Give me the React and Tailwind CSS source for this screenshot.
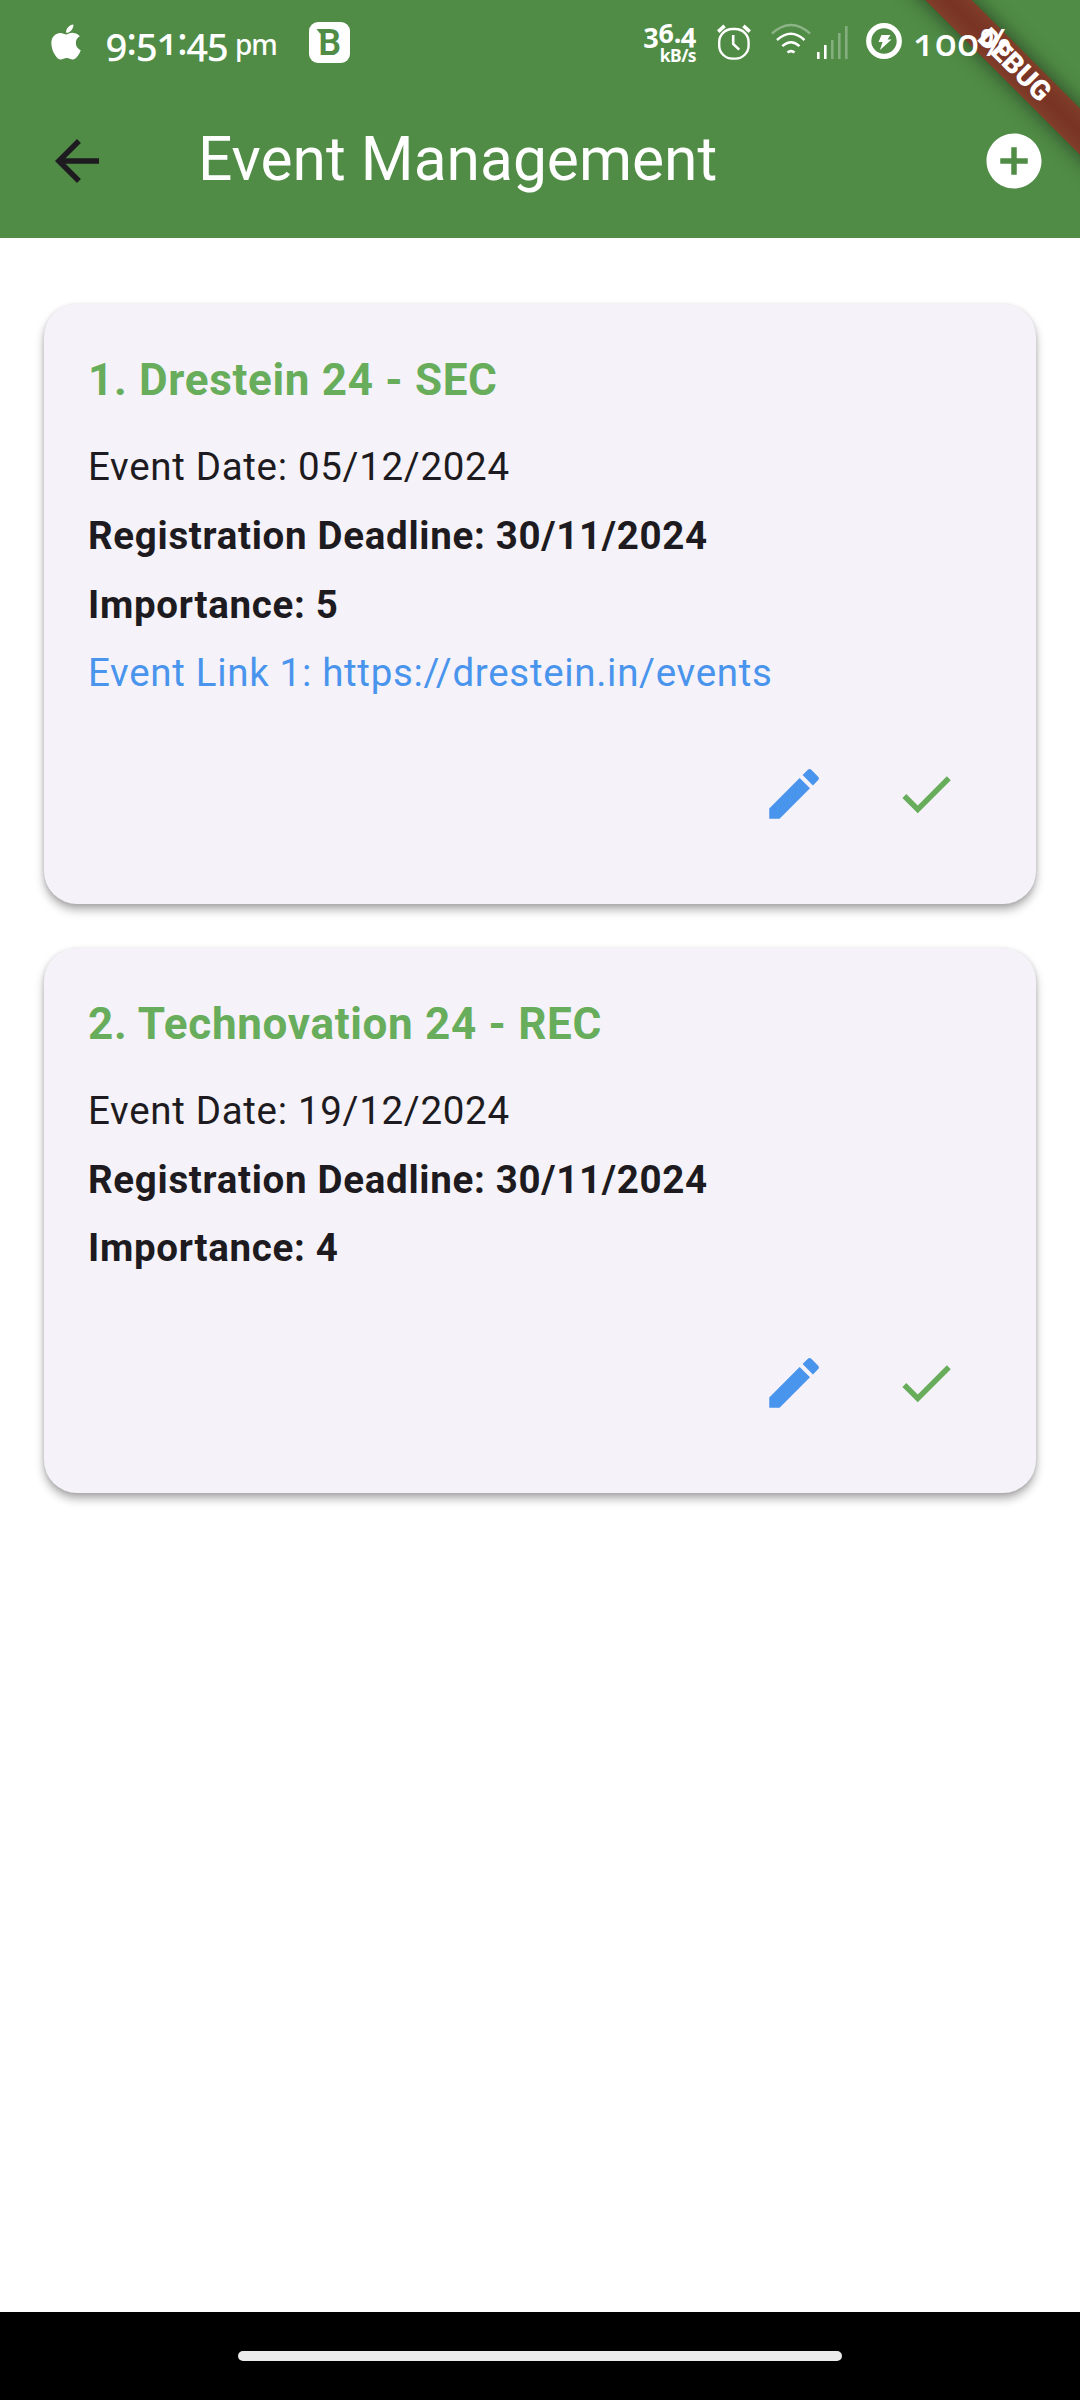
import React from 'react';
import { FaApple } from 'react-icons/fa';
import { MdAddCircle, MdArrowBack, MdCheck, MdEdit } from 'react-icons/md';

const events = [
  {
    title: '1. Drestein 24 - SEC',
    date: '05/12/2024',
    deadline: '30/11/2024',
    importance: 5,
    link: 'Event Link 1: https://drestein.in/events',
  },
  { title: '2. Technovation 24 - REC', date: '19/12/2024', deadline: '30/11/2024', importance: 4 },
];

function AlarmIcon() {
  return (
    <svg className="ml-[21px] mt-[24px] h-9 w-[34px] shrink-0" viewBox="0 0 34 36" fill="none" stroke="#fff">
      <rect x="2.2" y="5" width="29.4" height="29.6" rx="13.2" strokeWidth="2.4" />
      <path d="M1.2 7.6 7.6 1.8M32.8 7.6 26.4 1.8" strokeWidth="3.6" />
      <path d="M16.2 11v9l6 5.6" strokeWidth="2.6" />
    </svg>
  );
}

function WifiIcon() {
  return (
    <svg className="ml-[20px] mt-[23px] h-8 w-10 shrink-0" viewBox="0 0 40 32" fill="none" stroke="#fff" strokeWidth="2.4">
      <path d="M1 10.5Q20 -6.5 39 10.5" opacity=".35" />
      <path d="M6 17Q20 4.5 33.5 17" />
      <path d="M11.3 23.2Q20 15.4 28.5 23.2" />
      <path d="M16.5 29.5Q20 26.8 23.5 29.5" strokeWidth="2.8" />
    </svg>
  );
}

function SignalIcon() {
  return (
    <svg className="ml-[5px] mt-[26px] h-[33px] w-8 shrink-0" viewBox="0 0 32 33" fill="#fff">
      <rect x="1" y="26" width="2.6" height="7" />
      <rect x="8" y="19" width="2.6" height="14" />
      <rect x="15" y="14" width="2.6" height="19" opacity=".3" />
      <rect x="22" y="7" width="2.6" height="26" opacity=".3" />
      <rect x="29" y="0" width="2.6" height="33" opacity=".3" />
    </svg>
  );
}

function ChargeIcon() {
  return (
    <svg className="ml-[18px] mt-[23px] size-9 shrink-0" viewBox="0 0 36 36">
      <circle cx="18" cy="18" r="15.3" fill="none" stroke="#fff" strokeWidth="5.2" />
      <path d="M15.5 12h9l-3 4.500h4L14 27l2.500-8H12.500z" fill="#fff" />
    </svg>
  );
}

function StatusBar() {
  return (
    <div className="relative z-20 flex h-[84px] items-start font-['Noto_Sans',sans-serif] text-white [font-feature-settings:'onum']">
      <FaApple className="ml-[48px] mt-[22px] h-[40px] w-[36px] shrink-0" />
      <div className="ml-[22px] mt-[14px] w-[122px] whitespace-nowrap text-[38px] font-medium leading-[52px] tracking-[-0.7px]">9:51:45</div>
      <div className="ml-[7px] mt-[24px] w-[50px] whitespace-nowrap text-[28px] font-medium leading-[40px] tracking-[-1.2px]">pm</div>
      <svg className="ml-[24px] mt-[22px] size-[41px] shrink-0" viewBox="0 0 41 41">
        <rect width="41" height="41" rx="9" fill="#fff" />
        <text x="9.2" y="33" fontFamily="Roboto" fontSize="36" fontWeight="600" fill="#508c46">B</text>
        <path d="M7.500 7h6v4.500h-2.500z" fill="#508c46" />
      </svg>
      <div className="ml-[288px] mt-[19px] flex w-[58px] flex-col items-end whitespace-nowrap font-bold">
        <div className="text-[27px] leading-[28px] tracking-[-0.5px]">36.4</div>
        <div className="mt-[-3px] text-[17.5px] leading-[22px] tracking-[-0.6px]">kB/s</div>
      </div>
      <AlarmIcon />
      <WifiIcon />
      <SignalIcon />
      <ChargeIcon />
      <div className="ml-[11px] mt-[15px] whitespace-nowrap text-[38px] font-medium leading-[52px] tracking-[1px]">100%</div>
    </div>
  );
}

function DebugBanner() {
  return (
    <div className="pointer-events-none absolute right-0 top-0 z-10 size-[240px] overflow-hidden">
      <div className="absolute left-[-26px] top-[49px] h-[33px] w-[400px] rotate-45 bg-black/50 blur-[10.9px]" />
      <div className="absolute left-[-26px] top-[49px] h-[33px] w-[400px] rotate-45 bg-[rgba(169,38,35,0.627)] text-center text-[28px] font-black leading-[31px] text-white">
        DEBUG
      </div>
    </div>
  );
}

function EventCard({ event }) {
  return (
    <article className="rounded-[33px] bg-[#f5f2f9] p-[44px] shadow-[0_6px_10px_rgba(0,0,0,0.3),0_1px_4px_rgba(0,0,0,0.12)]">
      <h2 className="mb-[26px] text-[44px] font-bold leading-[65px] text-[#67ad5b]">{event.title}</h2>
      <p className="mb-[13.75px]">Event Date: {event.date}</p>
      <p className="mb-[13.75px] font-bold">Registration Deadline: {event.deadline}</p>
      <p className="mb-[13.75px] font-bold">Importance: {event.importance}</p>
      {event.link && <p className="text-[#4994ec]">{event.link}</p>}
      <div className="flex justify-end pt-[27.5px]">
        <button className="flex size-[132px] items-center justify-center text-[#4994ec]"><MdEdit size={66} /></button>
        <button className="flex size-[132px] items-center justify-center text-[#67ad5b]"><MdCheck size={66} /></button>
      </div>
    </article>
  );
}

export default function App() {
  return (
    <div className="relative flex h-[2400px] w-[1080px] flex-col overflow-hidden bg-white font-['Roboto',sans-serif]">
      <header className="h-[238px] shrink-0 bg-[#508c46]">
        <StatusBar />
        <div className="flex h-[154px] items-center">
          <button className="flex w-[154px] justify-center text-[#1d1b20]"><MdArrowBack size={66} /></button>
          <h1 className="mb-[3px] ml-[44px] grow whitespace-nowrap text-[60.5px] leading-[77px] text-white">Event Management</h1>
          <button className="flex w-[132px] justify-center text-white"><MdAddCircle size={66} /></button>
        </div>
      </header>
      <DebugBanner />
      <main className="flex grow flex-col gap-[44px] px-[44px] pt-[66px] text-[38.5px] leading-[55px] tracking-[0.6875px] text-[#1d1b20]">
        {events.map((event) => <EventCard key={event.title} event={event} />)}
      </main>
      <footer className="flex h-[88px] shrink-0 items-center justify-center bg-black">
        <div className="h-[10px] w-[604px] rounded-full bg-[#ebebeb]" />
      </footer>
    </div>
  );
}
